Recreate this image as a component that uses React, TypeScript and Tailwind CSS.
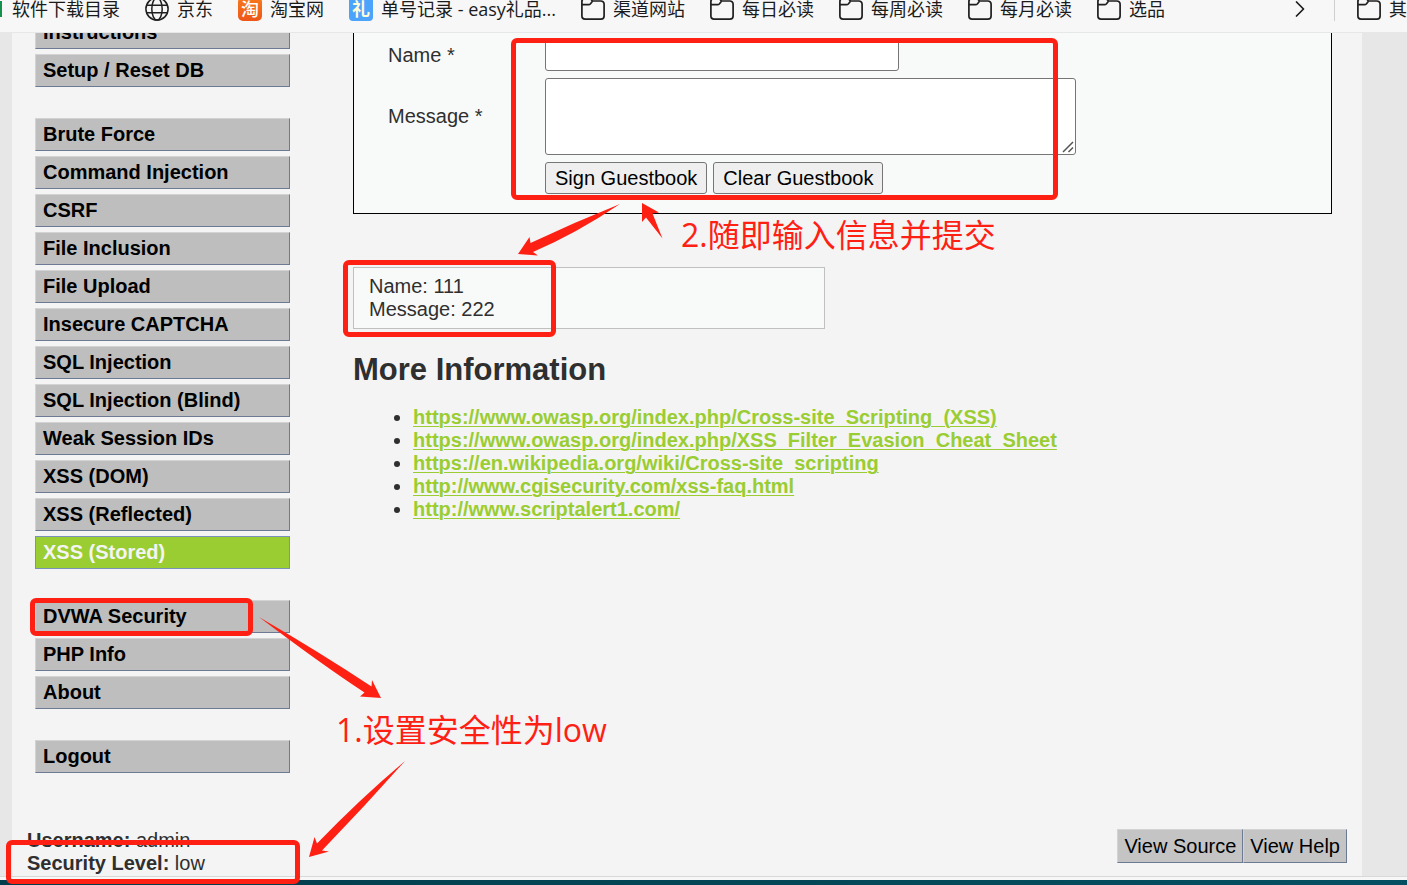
import { ChevronRight } from 'lucide-react';
import clsx from 'clsx';

const NAV_GROUPS = [
  ['Instructions', 'Setup / Reset DB'],
  [
    'Brute Force',
    'Command Injection',
    'CSRF',
    'File Inclusion',
    'File Upload',
    'Insecure CAPTCHA',
    'SQL Injection',
    'SQL Injection (Blind)',
    'Weak Session IDs',
    'XSS (DOM)',
    'XSS (Reflected)',
    'XSS (Stored)',
  ],
  ['DVWA Security', 'PHP Info', 'About'],
  ['Logout'],
];

const LINKS = [
  'https://www.owasp.org/index.php/Cross-site_Scripting_(XSS)',
  'https://www.owasp.org/index.php/XSS_Filter_Evasion_Cheat_Sheet',
  'https://en.wikipedia.org/wiki/Cross-site_scripting',
  'http://www.cgisecurity.com/xss-faq.html',
  'http://www.scriptalert1.com/',
];

const FOLDERS = ['渠道网站', '每日必读', '每周必读', '每月必读', '选品'];

function FolderIcon() {
  return (
    <svg viewBox="0 0 24 24" className="size-6 shrink-0" fill="none" stroke="#1f1f1f" strokeWidth="1.7">
      <path d="M.9 6V4.500A3.200 3.200 0 0 1 4.100 1.300h3.600c.9 0 1.500.3 2.100.9l1.700 1.800h8.400A3.200 3.200 0 0 1 23.100 7.200v11.700a3.200 3.200 0 0 1-3.200 3.200H4.100A3.200 3.200 0 0 1 .9 18.900V6z" />
      <path d="M.9 7.700h6.600c.8 0 1.500-.3 2-.9l2-2.600" />
    </svg>
  );
}

function GlobeIcon() {
  return (
    <svg viewBox="0 0 24 24" className="size-6 shrink-0" fill="none" stroke="#1f1f1f" strokeWidth="1.5">
      <circle cx="12" cy="12" r="11.1" />
      <ellipse cx="12" cy="12" rx="5.2" ry="11.1" />
      <path d="M1.600 8.200h20.800M1.600 15.800h20.800" />
    </svg>
  );
}

function BookmarkBar() {
  return (
    <header className="h-[33px] border-b border-[#e6e8e8] bg-[#f7f7f7] font-['Open_Sans','Noto_Sans_CJK_SC',sans-serif] text-[18px] leading-[18px] text-[#1b1b1b]">
      <nav className="flex h-[18px] items-center whitespace-nowrap">
        <div className="flex min-w-0 flex-1 items-center gap-[25px]">
          <a href="#" className="flex items-center gap-[10px]">
            <span className="h-4 w-[2px] bg-[#12924c]" />
            软件下载目录
          </a>
          <a href="#" className="flex items-center gap-2">
            <GlobeIcon />
            京东
          </a>
          <a href="#" className="flex items-center gap-2">
            <span className="flex size-6 items-center justify-center rounded-[5px] bg-gradient-to-b from-[#f77a1c] to-[#ee5518] font-medium text-white">淘</span>
            淘宝网
          </a>
          <a href="#" className="flex items-center gap-2">
            <span className="flex size-6 items-center justify-center rounded-sm bg-[#4ba3fb] font-bold text-[#fdfbd8]">礼</span>
            单号记录 - easy礼品...
          </a>
          {FOLDERS.map((name) => (
            <a key={name} href="#" className="flex items-center gap-2">
              <FolderIcon />
              {name}
            </a>
          ))}
        </div>
        <button type="button" aria-label="More bookmarks" className="mr-5">
          <ChevronRight className="size-7" strokeWidth={1.5} />
        </button>
        <span className="h-6 w-px bg-[#cfcfcf]" />
        <a href="#" className="ml-[22px] flex w-[50px] items-center gap-2">
          <FolderIcon />
          其
        </a>
      </nav>
    </header>
  );
}

function Sidebar() {
  return (
    <nav className="flex w-[255px] shrink-0 flex-col gap-[31px]">
      {NAV_GROUPS.map((group) => (
        <ul key={group[0]} className="flex flex-col gap-[5px]">
          {group.map((item) => (
            <li key={item}>
              <a
                href="#"
                className={clsx(
                  'block h-[33px] border pl-[7px] font-bold leading-[31px]',
                  item === 'XSS (Stored)'
                    ? 'border-[#7a92b8] bg-[#9acd32] text-[#f4f4f4]'
                    : 'border-t-[#d3d3d3] border-r-[#6d7a94] border-b-[#6d7a94] border-l-[#d3d3d3] bg-[#bebebe] text-black',
                )}
              >
                {item}
              </a>
            </li>
          ))}
        </ul>
      ))}
    </nav>
  );
}

function GuestbookForm() {
  const field = 'rounded-[3px] border border-[#767676] bg-white';
  const button = 'h-8 rounded-[3px] border border-[#767676] bg-[#efefef] px-[9px] text-black';
  return (
    <form className="grid grid-cols-[157px_1fr] items-center gap-y-[7px] border border-black bg-[#f8faf9] pt-[22px] pb-[19px] pl-[34px]">
      <label htmlFor="name">Name *</label>
      <input id="name" type="text" className={clsx(field, 'h-8 w-[354px] px-1')} />
      <label htmlFor="message">Message *</label>
      <div className="relative w-[531px]">
        <textarea id="message" className={clsx(field, 'block h-[77px] w-full resize-none px-1')} />
        <svg className="pointer-events-none absolute right-0.5 bottom-0.5 size-3" viewBox="0 0 12 12" stroke="#555" strokeWidth="1.5">
          <path d="M1 11 11 1M6.500 11 11 6.500" />
        </svg>
      </div>
      <div className="col-start-2 flex gap-[6px]">
        <button type="button" className={button}>Sign Guestbook</button>
        <button type="button" className={button}>Clear Guestbook</button>
      </div>
    </form>
  );
}

const BOX = 'absolute rounded-md border-[5px] border-[#ff2014]';
const NOTE = "absolute whitespace-nowrap font-['Open_Sans','Noto_Sans_CJK_SC',sans-serif] text-[32px] leading-10 text-[#ff2014]";

// red marker boxes, arrows and notes laid over the page
function Annotations() {
  return (
    <div className="pointer-events-none absolute inset-0 overflow-hidden">
      <div className={clsx(BOX, 'top-[38px] left-[511px] h-[162px] w-[547px]')} />
      <div className={clsx(BOX, 'top-[260px] left-[343px] h-[77px] w-[213px]')} />
      <div className={clsx(BOX, 'top-[598px] left-[30px] h-[38px] w-[223px]')} />
      <div className={clsx(BOX, 'top-[840px] left-[6px] h-[44px] w-[294px]')} />

      <svg className="absolute top-[200px] left-[515px]" width="110" height="60" fill="#ff2014">
        <path d="M105 4Q60 22 15.500 43L14.500 37 3 54l20 1.500-5-3.500Q62 33 105 4Z" />
      </svg>
      <svg className="absolute top-[200px] left-[638px]" width="30" height="42" fill="#ff2014">
        <path d="M24.500 38.500 14.500 13.500 21 12.500 4 3v19l4-4.500Z" />
      </svg>
      <svg className="absolute top-[614px] left-[256px]" width="130" height="90" fill="#ff2014">
        <path d="M3 3Q65 39 115.500 72.500l.5-6.500L125 84l-21-1.500 4.500-4Q65 50 3 3Z" />
      </svg>
      <svg className="absolute top-[758px] left-[305px]" width="104" height="104" fill="#ff2014">
        <path d="M100 3Q56 40 12 85.500L9.500 79 4 99l20-5.500-7-1Q60 48 100 3Z" />
      </svg>

      <p className={clsx(NOTE, 'top-[215px] left-[681px]')}>2.随即输入信息并提交</p>
      <p className={clsx(NOTE, 'top-[710px] left-[336px]')}>1.设置安全性为low</p>
    </div>
  );
}

export default function App() {
  const footerButton =
    'h-[34px] border border-t-[#d3d3d3] border-r-[#6d7a94] border-b-[#6d7a94] border-l-[#d3d3d3] bg-[#c4c4c4] px-[6px] text-black';
  return (
    <div className="relative overflow-hidden font-['Liberation_Sans',Arial,sans-serif] text-[20px] leading-[23px] text-[#2f2f2f]">
      <BookmarkBar />

      <div className="overflow-hidden border-b border-[#d9d9d9] bg-[#e7e7e7]">
        <div className="mr-[45px] ml-3 bg-[#f4f4f4]">
          <div className="-mt-[17px] flex gap-[63px] pr-[30px] pl-[23px]">
            <Sidebar />
            <main className="min-w-0 flex-1">
              <GuestbookForm />
              <div className="mt-[53px] h-[62px] max-w-[472px] border border-[#c0c0c0] bg-[#f8faf9] pt-[7px] pl-[15px]">
                Name: 111
                <br />
                Message: 222
              </div>
              <h2 className="mt-[23px] text-[31px] font-bold leading-9">More Information</h2>
              <ul className="mt-[18px] list-disc pl-[60px]">
                {LINKS.map((url) => (
                  <li key={url}>
                    <a href={url} className="font-bold text-[#9acd32] underline decoration-1 underline-offset-2">{url}</a>
                  </li>
                ))}
              </ul>
            </main>
          </div>

          <footer className="mt-14 flex items-start justify-between pr-[15px] pb-px pl-[15px]">
            <div>
              <p><b>Username:</b> admin</p>
              <p><b>Security Level:</b> low</p>
            </div>
            <div className="flex">
              <button type="button" className={footerButton}>View Source</button>
              <button type="button" className={footerButton}>View Help</button>
            </div>
          </footer>
        </div>
      </div>
      <div className="h-[3px] bg-[#f7f7f7]" />
      <div className="h-[5px] bg-gradient-to-r from-[#033c4a] to-[#045062]" />

      <Annotations />
    </div>
  );
}
